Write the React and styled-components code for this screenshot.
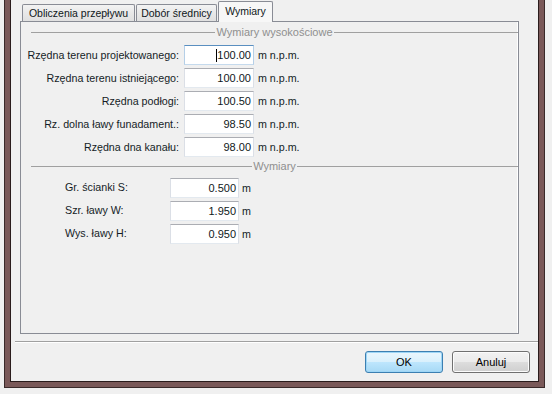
import styled, { createGlobalStyle } from 'styled-components';

const GlobalStyle = createGlobalStyle`
  html, body {
    margin: 0;
    background: #f0f0f0;
  }
  body {
    font-family: 'Liberation Sans', Arial, sans-serif;
    font-size: 10.7px;
    color: #141c26;
  }
  * {
    box-sizing: border-box;
  }
`;

const heightRows = [
  { label: 'Rzędna terenu projektowanego:', value: '100.00', focused: true },
  { label: 'Rzędna terenu istniejącego:', value: '100.00' },
  { label: 'Rzędna podłogi:', value: '100.50' },
  { label: 'Rz. dolna ławy funadament.:', value: '98.50' },
  { label: 'Rzędna dna kanału:', value: '98.00' },
];

const sizeRows = [
  { label: 'Gr. ścianki S:', value: '0.500' },
  { label: 'Szr. ławy W:', value: '1.950' },
  { label: 'Wys. ławy H:', value: '0.950' },
];

const tabs = [
  { label: 'Obliczenia przepływu', width: 113 },
  { label: 'Dobór średnicy', width: 81 },
  { label: 'Wymiary', width: 55, active: true },
];

export default function App() {
  return (
    <>
      <GlobalStyle />
      <Screen>
        <Frame>
          <Client>
            <TabArea>
              <TabStrip>
                {tabs.map((t) => (
                  <Tab key={t.label} $active={t.active} $width={t.width}>
                    {t.label}
                  </Tab>
                ))}
              </TabStrip>
              <Panel>
                <GroupHeader>
                  <Rule />
                  <GroupTitle>Wymiary wysokościowe</GroupTitle>
                  <Rule />
                </GroupHeader>
                <HeightGrid>
                  {heightRows.map((r) => (
                    <Row key={r.label}>
                      <RightLabel>{r.label}</RightLabel>
                      <Field $focused={r.focused}>
                        {r.focused && <Caret />}
                        {r.value}
                      </Field>
                      <Unit>m n.p.m.</Unit>
                    </Row>
                  ))}
                </HeightGrid>
                <GroupHeader $top={3}>
                  <Rule />
                  <GroupTitle>Wymiary</GroupTitle>
                  <Rule />
                </GroupHeader>
                <SizeGrid>
                  {sizeRows.map((r) => (
                    <Row key={r.label}>
                      <LeftLabel>{r.label}</LeftLabel>
                      <Field>{r.value}</Field>
                      <Unit $gap={3}>m</Unit>
                    </Row>
                  ))}
                </SizeGrid>
              </Panel>
            </TabArea>
            <Separator />
            <ButtonBar>
              <Button $primary>OK</Button>
              <Button>Anuluj</Button>
            </ButtonBar>
          </Client>
        </Frame>
      </Screen>
    </>
  );
}

const Screen = styled.div`
  width: 552px;
  height: 394px;
  padding-left: 4px;
  display: flex;
  align-items: flex-start;
`;

const Frame = styled.div`
  width: 541px;
  height: 388px;
  display: flex;
  padding: 0 5px 5px;
  background: #7a5959;
  border: 1px solid #3a2a2a;
  border-top: none;
`;

const Client = styled.div`
  flex: 1;
  display: flex;
  flex-direction: column;
  background: #f0f0f0;
  border: 1px solid #2a1c1c;
  border-top: none;
`;

const TabArea = styled.div`
  margin-left: 9px;
  width: 499px;
  display: flex;
  flex-direction: column;
`;

const TabStrip = styled.div`
  height: 21px;
  display: flex;
  align-items: flex-end;
  padding-left: 2px;
`;

const Tab = styled.div`
  position: relative;
  z-index: ${({ $active }) => ($active ? 1 : 0)};
  width: ${({ $width }) => $width}px;
  height: ${({ $active }) => ($active ? 21 : 17)}px;
  margin-bottom: ${({ $active }) => ($active ? -1 : 0)}px;
  margin-right: 1px;
  display: flex;
  align-items: ${({ $active }) => ($active ? 'flex-start' : 'center')};
  justify-content: center;
  padding-top: ${({ $active }) => ($active ? 3 : 0)}px;
  border: 1px solid #898c95;
  border-bottom: none;
  border-radius: 2px 2px 0 0;
  background: ${({ $active }) =>
    $active ? '#f7f7f7' : 'linear-gradient(#f3f3f3, #e8e8e8 50%, #e0e0e0)'};
  color: #0f1720;
  font-size: 10.5px;
  white-space: nowrap;
`;

const Panel = styled.div`
  height: 313px;
  border: 1px solid #898c95;
  background: #f0f0f0;
  box-shadow: inset -1px 0 #ffffff;
`;

const GroupHeader = styled.div`
  height: 13px;
  margin: ${({ $top }) => $top ?? 4}px 0 0 10px;
  display: flex;
  align-items: center;
`;

const Rule = styled.div`
  flex: 1;
  height: 1px;
  background: #a0a0a0;
`;

const GroupTitle = styled.span`
  padding: 0 1px;
  color: #8f8f8f;
  font-size: 11px;
  line-height: 13px;
`;

const HeightGrid = styled.div`
  margin-top: 6px;
  padding-left: 1px;
  display: grid;
  grid-template-columns: 157px 70px auto;
  column-gap: 5px;
  row-gap: 3px;
`;

const SizeGrid = styled.div`
  margin-top: 5px;
  padding-left: 44px;
  display: grid;
  grid-template-columns: 105px 69px auto;
  row-gap: 3px;
`;

const Row = styled.div`
  display: contents;
`;

const RightLabel = styled.div`
  height: 20px;
  display: flex;
  align-items: center;
  justify-content: flex-end;
  white-space: nowrap;
`;

const LeftLabel = styled.div`
  height: 20px;
  display: flex;
  align-items: center;
  padding-bottom: 3px;
  white-space: nowrap;
`;

const Field = styled.div`
  height: 20px;
  display: flex;
  align-items: center;
  justify-content: flex-end;
  padding: 0 2px 0 0;
  background: #ffffff;
  border: 1px solid;
  border-color: ${({ $focused }) =>
    $focused
      ? '#5a8fc0 #b5cfe7 #c5daed #b5cfe7'
      : '#abadb3 #dbdfe6 #e3e9ef #dbdfe6'};
  color: #101820;
  font-size: 11px;
`;

const Caret = styled.span`
  width: 1px;
  height: 13px;
  background: #000000;
`;

const Unit = styled.div`
  height: 20px;
  display: flex;
  align-items: center;
  margin-left: ${({ $gap }) => $gap ?? -1}px;
  white-space: nowrap;
`;

const Separator = styled.div`
  margin: 7px 0 0 4px;
  height: 2px;
  border-top: 1px solid #a0a0a0;
  border-bottom: 1px solid #ffffff;
`;

const ButtonBar = styled.div`
  margin-top: 8px;
  padding-right: 8px;
  display: flex;
  justify-content: flex-end;
  gap: 9px;
`;

const Button = styled.div`
  width: 78px;
  height: 22px;
  display: flex;
  align-items: center;
  justify-content: center;
  border-radius: 3px;
  border: 1px solid ${({ $primary }) => ($primary ? '#3c7fb1' : '#707070')};
  background: ${({ $primary }) =>
    $primary
      ? 'linear-gradient(#eaf6fd, #d9f0fc 50%, #bee6fd 50%, #a7d9f5)'
      : 'linear-gradient(#f2f2f2, #ebebeb 50%, #dddddd 50%, #cfcfcf)'};
  box-shadow: inset 0 0 0 1px
    ${({ $primary }) => ($primary ? '#9ed6f6' : '#fcfcfc')};
  color: #000000;
  font-size: 11px;
`;
